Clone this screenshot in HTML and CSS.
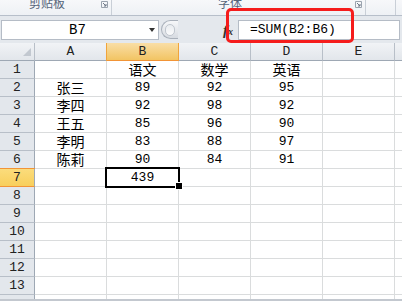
FILE: index.html
```html
<!DOCTYPE html>
<html lang="zh-CN">
<head>
  <meta charset="UTF-8">
  <title>SUM 求和</title>
  <link rel="stylesheet" href="styles.css">
</head>
<body>

<div class="app">
  <div class="ribbon">
    <div class="group g1">
      <span class="glabel">剪贴板</span>
      <svg class="launcher" viewBox="0 0 7 7"><path d="M0.5 0.5h6v6h-6z" fill="none" stroke="#9aa3ae"/><path d="M2 2l3 3M5 3v2h-2" fill="none" stroke="#6d7785"/></svg>
    </div>
    <div class="group g2">
      <span class="glabel">字体</span>
      <svg class="launcher" viewBox="0 0 7 7"><path d="M0.5 0.5h6v6h-6z" fill="none" stroke="#9aa3ae"/><path d="M2 2l3 3M5 3v2h-2" fill="none" stroke="#6d7785"/></svg>
    </div>
    <div class="group g3"></div>
  </div>

  <div class="fbar">
    <div class="namebox"><span class="name">B7</span><span class="arrow"></span></div>
    <div class="splitter"><span class="dimple"></span></div>
    <div class="fx"><i>f</i><i class="x">x</i></div>
    <div class="formula">=SUM(B2:B6)</div>
  </div>

  <div class="sheet">
    <div class="hd corner"></div><div class="hd">A</div><div class="hd sel">B</div><div class="hd">C</div><div class="hd">D</div><div class="hd">E</div><div class="hd last"></div>

    <div class="rh">1</div><div class="c"></div><div class="c zh">语文</div><div class="c zh">数学</div><div class="c zh">英语</div><div class="c"></div><div class="c last"></div>
    <div class="rh">2</div><div class="c zh">张三</div><div class="c">89</div><div class="c">92</div><div class="c">95</div><div class="c"></div><div class="c last"></div>
    <div class="rh">3</div><div class="c zh">李四</div><div class="c">92</div><div class="c">98</div><div class="c">92</div><div class="c"></div><div class="c last"></div>
    <div class="rh">4</div><div class="c zh">王五</div><div class="c">85</div><div class="c">96</div><div class="c">90</div><div class="c"></div><div class="c last"></div>
    <div class="rh">5</div><div class="c zh">李明</div><div class="c">83</div><div class="c">88</div><div class="c">97</div><div class="c"></div><div class="c last"></div>
    <div class="rh">6</div><div class="c zh">陈莉</div><div class="c">90</div><div class="c">84</div><div class="c">91</div><div class="c"></div><div class="c last"></div>
    <div class="rh sel">7</div><div class="c"></div><div class="c cur">439</div><div class="c"></div><div class="c"></div><div class="c"></div><div class="c last"></div>
    <div class="rh">8</div><div class="c"></div><div class="c"></div><div class="c"></div><div class="c"></div><div class="c"></div><div class="c last"></div>
    <div class="rh">9</div><div class="c"></div><div class="c"></div><div class="c"></div><div class="c"></div><div class="c"></div><div class="c last"></div>
    <div class="rh">10</div><div class="c"></div><div class="c"></div><div class="c"></div><div class="c"></div><div class="c"></div><div class="c last"></div>
    <div class="rh">11</div><div class="c"></div><div class="c"></div><div class="c"></div><div class="c"></div><div class="c"></div><div class="c last"></div>
    <div class="rh">12</div><div class="c"></div><div class="c"></div><div class="c"></div><div class="c"></div><div class="c"></div><div class="c last"></div>
    <div class="rh">13</div><div class="c"></div><div class="c"></div><div class="c"></div><div class="c"></div><div class="c"></div><div class="c last"></div>
    <div class="rh"></div><div class="c"></div><div class="c"></div><div class="c"></div><div class="c"></div><div class="c"></div><div class="c last"></div>
  </div>

  <div class="highlight"></div>
</div>

</body>
</html>
```

FILE: styles.css
```css
* { box-sizing: border-box; }
body { margin: 0; width: 402px; height: 301px; overflow: hidden; background: #fff; font-family: "Liberation Mono", "Noto Sans CJK SC", monospace; color: #000; }
.app { position: relative; height: 301px; }

/* ribbon strip (group labels only) */
.ribbon { display: flex; height: 16px; background: linear-gradient(#f7f8fa, #eef1f5); border-bottom: 1px solid #b7bfca; overflow: hidden; }
.group { display: flex; align-items: flex-start; height: 15px; border-right: 1px solid #c9cfd7; }
.g1 { width: 112px; padding-left: 29px; }
.g2 { width: 254px; padding-left: 106px; }
.g3 { width: 30px; }
.glabel { font-family: "Noto Sans CJK SC", sans-serif; font-size: 12px; line-height: 12px; margin-top: -3px; color: #56657a; }
.launcher { width: 7px; height: 7px; margin-left: auto; margin-right: 3px; margin-top: 1px; }

/* formula bar */
.fbar { display: flex; align-items: flex-start; height: 27px; padding: 4px 2px 0 1px; background: #e4e8ed; }
.namebox { display: flex; align-items: center; width: 158px; height: 20px; background: #fff; border: 1px solid #b5bcc6; }
.name { flex: 1; text-align: center; font-size: 14px; line-height: 18px; padding-left: 4px; }
.arrow { width: 0; height: 0; margin-right: 3px; border-left: 3px solid transparent; border-right: 3px solid transparent; border-top: 4px solid #333; }
.splitter { display: flex; align-items: center; width: 17px; height: 19px; margin-left: 2px; border: 1px solid #a9b0ba; border-right: none; border-radius: 10px 0 0 10px; background: linear-gradient(#f6f7f9, #d7dbe1); padding-left: 3px; }
.dimple { width: 10px; height: 12px; border-radius: 5px; border: 1px solid #c0c6ce; background: linear-gradient(#e9ecf0, #fbfbfc); }
.fx { width: 60px; height: 20px; text-align: right; padding-right: 5px; font-family: "Liberation Serif", serif; font-weight: bold; font-size: 15px; line-height: 20px; color: #333; }
.fx .x { font-size: 10px; }
.formula { flex: 1; height: 20px; background: #fff; border: 1px solid #b5bcc6; padding-left: 11px; font-size: 13px; line-height: 18px; }

/* worksheet grid */
.sheet { display: grid; grid-template-columns: 35px repeat(5, 72px) 1fr; grid-auto-rows: 18px; height: 258px; overflow: hidden; border-bottom: 2px solid #c3c8cf; }
.c { border-right: 1px solid #dadcdd; border-bottom: 1px solid #dadcdd; text-align: center; font-size: 13px; line-height: 18px; }
.zh { font-family: "Noto Sans CJK SC", sans-serif; font-size: 14px; line-height: 17px; }
.c.last { border-right: none; }
.hd { background: linear-gradient(#f1f3f6, #e2e6eb); border-right: 1px solid #b8bfc8; border-bottom: 1px solid #9ea8b4; text-align: center; font-size: 13px; line-height: 17px; color: #222; }
.hd.last { border-right: none; }
.hd.sel { background: linear-gradient(#f9dea6, #f2c463); border-right-color: #f0a43c; border-bottom-color: #f29436; box-shadow: -1px 0 0 #f0a43c; }
.corner { display: flex; align-items: flex-end; justify-content: flex-end; padding: 0 3px 4px 0; }
.corner::after { content: ""; width: 0; height: 0; border-left: 8px solid transparent; border-bottom: 8px solid #c2c8d0; }
.rh { background: #e3e7ec; border-right: 1px solid #9ea8b4; border-bottom: 1px solid #b8bfc8; text-align: center; font-size: 13px; line-height: 18px; color: #222; }
.rh.sel { background: linear-gradient(#fbdc7c, #f8cf5c); border-bottom-color: #f29436; box-shadow: 0 -1px 0 #f29436; }

/* active cell */
.cur { position: relative; }
.cur::after { content: ""; position: absolute; top: -2px; left: -2px; right: -2px; bottom: -2px; border: 2px solid #000; z-index: 1; }
.cur::before { content: ""; position: absolute; right: -5px; bottom: -4px; width: 6px; height: 6px; background: #000; border: 1px solid #fff; z-index: 2; }

/* red annotation round the formula */
.highlight { position: absolute; left: 226px; top: 8px; width: 128px; height: 35px; border: 3px solid #f51c1c; border-radius: 5px; }
```
